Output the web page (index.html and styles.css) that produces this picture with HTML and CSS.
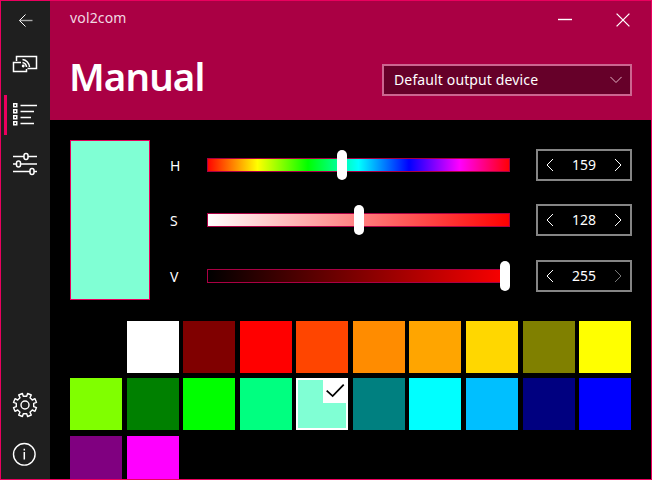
FILE: index.html
```html
<!DOCTYPE html>
<html lang="en">
<head>
<meta charset="utf-8">
<title>vol2com</title>
<link rel="stylesheet" href="styles.css">
</head>
<body>
<div class="window">
  <nav class="sidebar">
    <button class="nav back" aria-label="Back"><svg width="26" height="26" viewBox="0 0 26 26"><path d="M7.500 13.500H20.500" stroke="#aaa" stroke-width="1.400"/><path d="M13.500 7.500L7.500 13.500l6 6"/></svg></button>
    <button class="nav" aria-label="Devices"><svg width="26" height="26" viewBox="0 0 26 26" stroke-width="1.500"><path d="M4.500 10V5.500H24.500V17.500H15.500"/><path d="M9 11.500H1.500V20.500H14.500V18"/><path d="M10.500 8.500a8 8 0 0 1 7 7.500M10.500 11.500a5 5 0 0 1 4 4.500"/><circle cx="11.200" cy="15" r=".7" fill="#fff"/></svg></button>
    <button class="nav selected" aria-label="Manual"><svg width="26" height="26" viewBox="0 0 26 26"><path d="M1.750 2.750h3v3h-3zM1.750 8.750h3v3h-3zM1.750 14.750h3v3h-3zM1.750 20.750h3v3h-3z" stroke-width="1.500"/><path d="M8.500 4.500H25M8.500 10.500H22M8.500 16.500H19M8.500 22.500H22" stroke-width="1.500"/></svg></button>
    <button class="nav" aria-label="Adjust"><svg width="26" height="26" viewBox="0 0 26 26" stroke-width="1.500"><path d="M1 5.500H12M16 5.500H25M1 13H4.500M8.500 13H25M1 20.500H18M22 20.500H25"/><rect x="12" y="2.500" width="4" height="6" rx="2"/><rect x="4.500" y="10" width="4" height="6" rx="2"/><rect x="18" y="17.500" width="4" height="6" rx="2"/></svg></button>
    <span class="spacer"></span>
    <button class="nav settings" aria-label="Settings"><svg width="26" height="26" viewBox="-13 -13 26 26" stroke-width="1.400" stroke-linejoin="round"><path d="M-1.700-8.700L-2.600-11.500L-6.300-10L-5-7.300L-7.300-5L-10-6.300L-11.500-2.600L-8.700-1.700V1.700L-11.500 2.600L-10 6.300L-7.300 5L-5 7.300L-6.300 10L-2.600 11.500L-1.700 8.700H1.700L2.600 11.500L6.300 10L5 7.300L7.300 5L10 6.300L11.500 2.600L8.700 1.700V-1.700L11.500-2.600L10-6.300L7.300-5L5-7.300L6.300-10L2.600-11.500L1.700-8.700Z"/><circle r="4"/></svg></button>
    <button class="nav" aria-label="About"><svg width="26" height="26" viewBox="0 0 26 26"><circle cx="12.300" cy="13.300" r="10.800" stroke-width="1.400"/><path d="M12.300 11V18.500M12.300 7.700V9.400" stroke-width="1.500"/></svg></button>
  </nav>
  <div class="page">
    <header class="header">
      <div class="titlebar">
        <span class="app-name">vol2com</span>
        <svg class="minimize" width="14" height="14" viewBox="0 0 14 14"><path d="M0 6.500H14"/></svg>
        <svg class="close" width="14" height="14" viewBox="0 0 14 14"><path d="M.6 .6L13.400 13.400M13.400 .6L.6 13.400"/></svg>
      </div>
      <div class="heading">
        <h1>Manual</h1>
        <div class="combo"><span>Default output device</span><svg width="12" height="8" viewBox="0 0 12 8"><path d="M.4 .9L6 6.500L11.600 .9"/></svg></div>
      </div>
    </header>
    <main class="content">
      <section class="picker">
        <div class="preview"></div>
        <div class="channels">
          <div class="channel"><label>H</label><div class="track hue"><i class="thumb" style="left:129px"></i></div><div class="number"><svg viewBox="0 0 8 14"><path d="M7 1L1 7l6 6"/></svg><span>159</span><svg viewBox="0 0 8 14"><path d="M1 1l6 6l-6 6"/></svg></div></div>
          <div class="channel"><label>S</label><div class="track saturation"><i class="thumb" style="left:146px"></i></div><div class="number"><svg viewBox="0 0 8 14"><path d="M7 1L1 7l6 6"/></svg><span>128</span><svg viewBox="0 0 8 14"><path d="M1 1l6 6l-6 6"/></svg></div></div>
          <div class="channel"><label>V</label><div class="track value"><i class="thumb" style="left:292px"></i></div><div class="number"><svg viewBox="0 0 8 14"><path d="M7 1L1 7l6 6"/></svg><span>255</span><svg class="disabled" viewBox="0 0 8 14"><path d="M1 1l6 6l-6 6"/></svg></div></div>
        </div>
      </section>
      <section class="swatches">
        <i style="background:#000"></i><i style="background:#fff"></i><i style="background:#800000"></i><i style="background:#f00"></i><i style="background:#ff4500"></i><i style="background:#ff8c00"></i><i style="background:#ffa500"></i><i style="background:#ffd700"></i><i style="background:#808000"></i><i style="background:#ff0"></i>
        <i style="background:#80ff00"></i><i style="background:#008000"></i><i style="background:#0f0"></i><i style="background:#00ff80"></i><i class="chosen" style="background:#80ffd4"><svg width="25" height="23" viewBox="0 0 25 23"><path d="M4 10.500L10.500 16.500L22.500 4"/></svg></i><i style="background:#008080"></i><i style="background:#0ff"></i><i style="background:#00bfff"></i><i style="background:#000080"></i><i style="background:#00f"></i>
        <i style="background:#800080"></i><i style="background:#f0f"></i>
      </section>
    </main>
  </div>
</div>
</body>
</html>
```
FILE: styles.css
```css
* { box-sizing: border-box; }
body {
  margin: 0;
  background: #000;
  color: #fff;
  font: 14px/20px "Noto Sans", "Open Sans", sans-serif;
}
.window {
  display: flex;
  width: 652px;
  height: 480px;
  border: 1px solid #ea005e;
  overflow: hidden;
}
svg { display: block; flex: none; fill: none; stroke: #fff; }
.sidebar {
  display: flex;
  flex-direction: column;
  flex: none;
  width: 49px;
  background: #1f1f1f;
}
.nav {
  position: relative;
  display: flex;
  align-items: center;
  width: 49px;
  height: 50px;
  padding: 0 0 0 11px;
  border: 0;
  background: none;
}
.nav.back { height: 38px; }
.nav.settings { padding-top: 2px; }
.nav.selected::before {
  content: "";
  position: absolute;
  left: 3px;
  top: 6px;
  width: 3px;
  height: 40px;
  background: #ea005e;
}
.spacer { flex: 1; }
.page { flex: 1; min-width: 0; }
.header { height: 119px; background: #aa0044; }
.titlebar {
  display: flex;
  height: 38px;
  padding: 0 21px 0 20px;
}
.app-name {
  flex: 1;
  padding-top: 7px;
  color: #f1d9e2;
  letter-spacing: 0.15px;
}
.minimize { margin: 12px 44px 0 0; stroke-width: 1.4; }
.close { margin-top: 12px; stroke-width: 1.3; }
.heading {
  display: flex;
  align-items: center;
  justify-content: space-between;
  height: 82px;
  padding: 0 19px 0 20px;
}
h1 {
  margin: -9px 0 0 -1px;
  font-size: 38.5px;
  font-weight: 600;
  line-height: 52px;
  letter-spacing: -0.9px;
}
.combo {
  display: flex;
  align-items: center;
  justify-content: space-between;
  width: 250px;
  height: 32px;
  padding: 0 8px 0 10px;
  border: 2px solid #cc6690;
  background: #660029;
  letter-spacing: 0.13px;
}
.combo svg { stroke: #e0b3c4; }
.content { padding: 20px 19px 0 20px; }
.picker { display: flex; height: 160px; }
.preview {
  width: 80px;
  height: 160px;
  border: 1px solid #ea005e;
  background: #80ffd4;
}
.channels {
  display: grid;
  grid-template-rows: 55px 56px 32px;
  flex: 1;
  height: 143px;
  margin: 9px 0 0 20px;
}
.channel { display: flex; align-items: center; height: 32px; }
.channel label { width: 37px; padding-top: 1px; }
.track {
  position: relative;
  width: 303px;
  height: 14px;
  margin-right: 26px;
  border: 1px solid #aa0044;
  background-origin: border-box;
}
.hue { background-image: linear-gradient(90deg, #f00, #ff0, #0f0, #0ff, #00f, #f0f, #f00); }
.saturation { background-image: linear-gradient(90deg, #fff, #f00); }
.value { background-image: linear-gradient(90deg, #000, #f00); }
.thumb {
  position: absolute;
  top: -9px;
  width: 10px;
  height: 30px;
  border-radius: 5px;
  background: #fff;
}
.number {
  display: flex;
  align-items: center;
  justify-content: space-between;
  width: 96px;
  height: 32px;
  padding: 0 8px;
  border: 2px solid #858585;
}
.number svg { width: 8px; height: 14px; }
.number .disabled { stroke: #777; }
.swatches {
  display: grid;
  grid-template-columns: repeat(10, 52px);
  grid-auto-rows: 52px;
  gap: 5.4px 4.56px;
  margin-top: 21px;
  padding-left: 0.2px;
}
.swatches i { display: block; }
.swatches .chosen {
  display: flex;
  justify-content: flex-end;
  align-items: flex-start;
  border: 2px solid #fff;
}
.chosen svg { width: 23px; background: #fff; stroke: #000; stroke-width: 1.9; }
```
